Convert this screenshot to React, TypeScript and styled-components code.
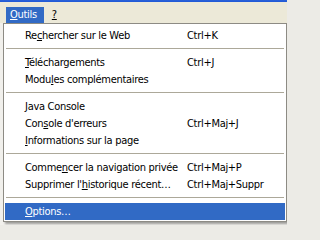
import styled, { createGlobalStyle } from 'styled-components';

type Entry =
  | { kind: 'item'; before: string; key: string; after: string; shortcut?: string; active?: boolean }
  | { kind: 'sep' };

const entries: Entry[] = [
  { kind: 'item', before: 'Re', key: 'c', after: 'hercher sur le Web', shortcut: 'Ctrl+K' },
  { kind: 'sep' },
  { kind: 'item', before: '', key: 'T', after: 'éléchargements', shortcut: 'Ctrl+J' },
  { kind: 'item', before: 'Modu', key: 'l', after: 'es complémentaires' },
  { kind: 'sep' },
  { kind: 'item', before: '', key: 'J', after: 'ava Console' },
  { kind: 'item', before: 'Con', key: 's', after: "ole d'erreurs", shortcut: 'Ctrl+Maj+J' },
  { kind: 'item', before: '', key: 'I', after: 'nformations sur la page' },
  { kind: 'sep' },
  { kind: 'item', before: 'Comme', key: 'n', after: 'cer la navigation privée', shortcut: 'Ctrl+Maj+P' },
  { kind: 'item', before: "Supprimer l'", key: 'h', after: 'istorique récent…', shortcut: 'Ctrl+Maj+Suppr' },
  { kind: 'sep' },
  { kind: 'item', before: '', key: 'O', after: 'ptions…', active: true },
];

const App = () => {
  return (
    <>
      <GlobalStyle />
      <Window>
        <TitleEdge />
        <MenuBar>
          <MenuTitle $open>
            <u>O</u>utils
          </MenuTitle>
          <MenuTitle>
            <u>?</u>
          </MenuTitle>
        </MenuBar>
        <Dropdown>
          {entries.map((entry, index) =>
            entry.kind === 'sep' ? (
              <Separator key={index} />
            ) : (
              <Item key={index} $active={entry.active}>
                <span>
                  {entry.before}
                  <u>{entry.key}</u>
                  {entry.after}
                </span>
                <span>{entry.shortcut}</span>
              </Item>
            )
          )}
        </Dropdown>
      </Window>
    </>
  );
};

export default App;

const GlobalStyle = createGlobalStyle`
  body {
    margin: 0;
    background: #ecebe6;
    font-family: "DejaVu Sans Condensed", "DejaVu Sans", sans-serif;
    font-stretch: condensed;
    font-size: 11px;
    letter-spacing: -0.3px;
  }
`;

const Window = styled.div`
  width: 287px;
  height: 225px;
  overflow: hidden;
  background: #f1f0ec;
`;

const TitleEdge = styled.div`
  height: 2px;
  background: linear-gradient(#2a62d8, #1f58d6);
`;

const MenuBar = styled.div`
  display: flex;
  align-items: flex-end;
  gap: 4px;
  height: 21px;
  padding-left: 6px;
  background: #ece9d8;
`;

const MenuTitle = styled.div<{ $open?: boolean }>`
  height: 16px;
  line-height: 16px;
  padding: 0 7px 0 4px;
  color: ${({ $open }) => ($open ? '#fff' : '#000')};
  background: ${({ $open }) => ($open ? '#316ac5' : 'transparent')};
`;

const Dropdown = styled.div`
  width: 280px;
  margin-left: 3px;
  padding: 3px 1px 1px;
  background: #fff;
  border: 1px solid #8d8b84;
  box-shadow: 2px 2px 2px rgba(0, 0, 0, 0.35);
`;

const Item = styled.div<{ $active?: boolean }>`
  display: grid;
  grid-template-columns: 162px 1fr;
  height: 17px;
  line-height: 17px;
  padding-left: 20px;
  white-space: nowrap;
  color: ${({ $active }) => ($active ? '#fff' : '#000')};
  background: ${({ $active }) => ($active ? '#316ac5' : 'transparent')};
`;

const Separator = styled.div`
  height: 0;
  margin: 4px 1px 5px;
  border-top: 1px solid #aca899;
`;
